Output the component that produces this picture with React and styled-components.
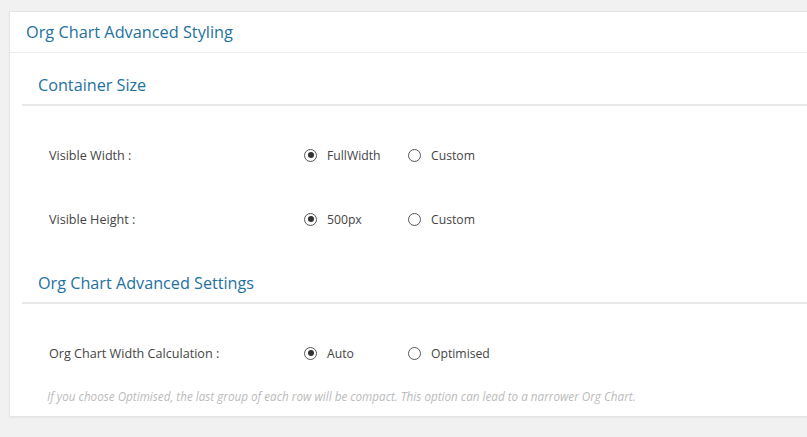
import React, { useState } from 'react'
import styled, { createGlobalStyle } from 'styled-components'

const GlobalStyle = createGlobalStyle`
    html, body {
        margin: 0;
        padding: 0;
        background: #f1f1f1;
        overflow: hidden;
    }
    body {
        font-family: 'Open Sans', 'Liberation Sans', sans-serif;
    }
`

const sections = [
    {
        title: 'Container Size',
        rows: [
            { key: 'width', label: 'Visible Width :', options: ['FullWidth', 'Custom'] },
            { key: 'height', label: 'Visible Height :', options: ['500px', 'Custom'] },
        ],
    },
    {
        title: 'Org Chart Advanced Settings',
        rows: [
            { key: 'calc', label: 'Org Chart Width Calculation :', options: ['Auto', 'Optimised'] },
        ],
        hint: 'If you choose Optimised, the last group of each row will be compact. This option can lead to a narrower Org Chart.',
    },
]

const App = () => {
    const [values, setValues] = useState({ width: 'FullWidth', height: '500px', calc: 'Auto' })

    return (
        <>
            <GlobalStyle />
            <Page>
                <Card>
                    <CardHeader>Org Chart Advanced Styling</CardHeader>
                    <CardBody>
                        {sections.map((section) => (
                            <Section key={section.title}>
                                <SectionTitle>{section.title}</SectionTitle>
                                {section.rows.map((row) => (
                                    <Row key={row.key}>
                                        <Label>{row.label}</Label>
                                        <Options>
                                            {row.options.map((opt) => (
                                                <Option
                                                    key={opt}
                                                    onClick={() => setValues({ ...values, [row.key]: opt })}
                                                >
                                                    <Radio $checked={values[row.key] === opt} />
                                                    {opt}
                                                </Option>
                                            ))}
                                        </Options>
                                    </Row>
                                ))}
                                {section.hint && <Hint>{section.hint}</Hint>}
                            </Section>
                        ))}
                    </CardBody>
                </Card>
            </Page>
        </>
    )
}

const Page = styled.div`
    padding: 11px 0 0 9px;
    height: 437px;
    box-sizing: border-box;
`

const Card = styled.div`
    background: #fff;
    border: 1px solid #e5e5e5;
    border-right: none;
    box-shadow: 0 1px 1px rgba(0, 0, 0, 0.04);
`

const CardHeader = styled.div`
    height: 40px;
    line-height: 41px;
    padding-left: 16px;
    font-size: 16.3px;
    color: #23719f;
    border-bottom: 1px solid #eeeeee;
`

const CardBody = styled.div`
    padding: 0 0 12px 12px;
`

const Section = styled.div`
    display: flex;
    flex-direction: column;
`

const SectionTitle = styled.div`
    padding: 21px 0 8px 16px;
    line-height: 22px;
    font-size: 16.2px;
    color: #23719f;
    border-bottom: 2px solid #e8e8e8;
    margin-bottom: 17px;
`

const Row = styled.div`
    display: flex;
    align-items: center;
    height: 64px;
    padding-left: 27px;
`

const Label = styled.div`
    width: 255px;
    font-size: 12.6px;
    color: #444;
`

const Options = styled.div`
    display: flex;
    align-items: center;
`

const Option = styled.label`
    display: flex;
    align-items: center;
    width: 104px;
    gap: 10px;
    font-size: 12.2px;
    color: #444;
    cursor: pointer;
`

const Radio = styled.span`
    width: 11px;
    height: 11px;
    border: 1px solid #555;
    border-radius: 50%;
    position: relative;
    flex-shrink: 0;

    &::after {
        content: '';
        display: ${(p) => (p.$checked ? 'block' : 'none')};
        position: absolute;
        top: 2.5px;
        left: 2.5px;
        width: 6px;
        height: 6px;
        border-radius: 50%;
        background: #333;
    }
`

const Hint = styled.div`
    padding: 3px 0 0 25px;
    font-size: 11.7px;
    font-style: italic;
    color: #bbbbbb;
`

export default App
